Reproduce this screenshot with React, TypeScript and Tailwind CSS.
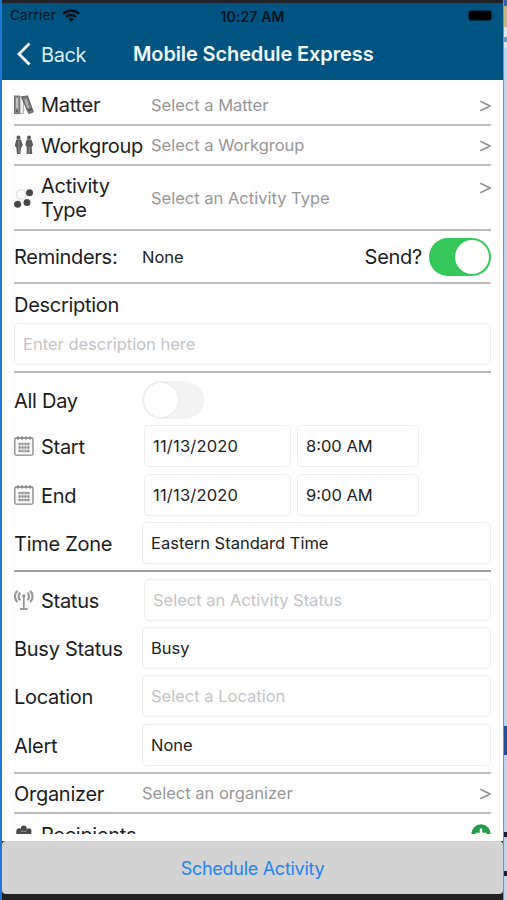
import React from 'react';

const labelText = 'text-[20px] leading-6 tracking-[-0.28px] text-[#1c1c1c]';
const valueText = 'text-[16.5px] leading-5 tracking-[0px]';

function WifiIcon() {
  return (
    <svg className="w-[18px] h-[13px]" viewBox="0 0 18 13">
      <path d="M1 4.8a11.600 11.600 0 0 1 16 0" fill="none" stroke="#05131d" strokeWidth="2.7" />
      <path d="M4 8a7.200 7.200 0 0 1 10 0" fill="none" stroke="#05131d" strokeWidth="2.4" />
      <path d="M6.300 10.200a4 4 0 0 1 5.400 0L9 13z" fill="#05131d" />
    </svg>
  );
}

function BooksIcon() {
  return (
    <svg className="w-5 h-5" viewBox="0 0 20 20">
      <rect x="0.5" y="1" width="5" height="17.5" fill="#8a8a8a" stroke="#666" strokeWidth="0.9" />
      <rect x="2" y="3" width="2" height="10" fill="#c4c4c4" />
      <rect x="6" y="1.5" width="3.500" height="17" fill="#e9e9e9" stroke="#999" strokeWidth="0.7" />
      <path d="M7.500 2l6-1.200L19.300 17l-4.600 1.600z" fill="#7d7d7d" stroke="#555" strokeWidth="0.9" />
      <path d="M10.400 4.500l2-.5 3 8.500-2 .6z" fill="#b4b4b4" />
      <path d="M14 15.500l4-1.400M2 16h2" stroke="#333" strokeWidth="1.1" />
    </svg>
  );
}

function PeopleIcon() {
  return (
    <svg className="w-5 h-5" viewBox="0 0 20 20">
      <g fill="#5a5a5a">
        <circle cx="4.5" cy="2.6" r="2" />
        <path d="M2.300 4.500h4.600l1.900 5.500-1.700 3-.8 6H3l-.6-6L.8 10.500z" />
        <circle cx="15" cy="2.600" r="2" />
        <path d="M12.600 4.500h4.900l1.700 5.500-1.600 2 .7 7h-5.700l.2-7-1.500-2z" />
      </g>
      <path d="M5 6v12M15.200 12v7" stroke="#9a9a9a" strokeWidth="0.9" />
    </svg>
  );
}

function DotsIcon() {
  return (
    <svg className="w-5 h-5" viewBox="0 0 20 20">
      <circle cx="7" cy="6.500" r="4.600" fill="none" stroke="#e2e2e2" strokeWidth="1.200" />
      <circle cx="15.500" cy="4.800" r="3.500" fill="#484848" />
      <circle cx="3.600" cy="16.200" r="3.500" fill="#484848" />
      <circle cx="13" cy="14.400" r="3.500" fill="#484848" />
    </svg>
  );
}

function CalendarIcon() {
  return (
    <svg className="w-5 h-5" viewBox="0 0 20 20" fill="none">
      <rect x="0.8" y="2" width="18.200" height="17.200" rx="1.5" stroke="#858585" strokeWidth="1.300" />
      <path d="M4 .5v3M8 .5v3M12 .5v3M16 .5v3" stroke="#858585" strokeWidth="2" />
      <path d="M4.500 8h11M4.500 11.500h11M4.500 15h11" stroke="#8d8d8d" strokeWidth="2.500" strokeDasharray="2.300 0.600" />
    </svg>
  );
}

function AntennaIcon() {
  return (
    <svg className="w-5 h-5" viewBox="0 0 20 20" fill="none" stroke="#999">
      <path d="M3.500 .8c-3.400 2.800-3.400 8.400 0 11.200M16 .8c3.400 2.800 3.400 8.400 0 11.200" strokeWidth="2.200" />
      <path d="M6.300 2.600c-2.200 2-2.200 5.600 0 7.600M13.300 2.600c2.200 2 2.200 5.600 0 7.600" strokeWidth="2.200" />
      <circle cx="9.800" cy="6" r="1.500" fill="#888" strokeWidth="0.5" />
      <path d="M9.800 6v12.500M6 19h7.600" strokeWidth="1.800" />
    </svg>
  );
}

function GroupIcon() {
  return (
    <svg className="w-5 h-5" viewBox="0 0 20 20" fill="#4a4a4a">
      <circle cx="9.800" cy="4.600" r="3" />
      <circle cx="5" cy="6.800" r="2.600" />
      <circle cx="14.800" cy="6.800" r="2.600" />
      <path d="M2.300 7.500h15v6h-15z" />
    </svg>
  );
}

function Chevron() {
  return (
    <svg className="relative top-px w-3 h-3 ml-auto" viewBox="0 0 12 12">
      <path d="M1.300 1.300L11 6 1.300 10.700" fill="none" stroke="#929292" strokeWidth="1.600" />
    </svg>
  );
}

function Label({ icon, children }: { icon?: React.ReactNode; children: React.ReactNode }) {
  return (
    <div className="w-[128px] shrink-0 flex items-center whitespace-nowrap">
      {icon && <span className="w-[27px] shrink-0">{icon}</span>}
      <span className={`${labelText} pt-px`}>{children}</span>
    </div>
  );
}

function Field({ className = '', placeholder = false, children }: { className?: string; placeholder?: boolean; children: React.ReactNode }) {
  return (
    <div className={`h-[42px] flex items-center rounded-[5px] border border-[#ededed] px-2 ${valueText} ${placeholder ? 'text-[#c4c4c6]' : 'text-[#222]'} ${className}`}>
      {children}
    </div>
  );
}

export default function App() {
  return (
    <div className="w-[507px] h-[900px] flex overflow-hidden bg-[#1d78d6] pl-0.5 font-['Inter','Liberation_Sans',sans-serif]">
      <div className="w-[501px] h-full flex flex-col bg-white">
        <div className="h-[3px] shrink-0 bg-[#252329]" />
        <header className="h-[77px] shrink-0 bg-[#005481]">
          <div className="h-[25px] grid grid-cols-3 items-center text-[#05131d]">
            <div className="flex items-center gap-[6px] pl-2 text-[13.500px] tracking-[0.250px]">
              Carrier
              <WifiIcon />
            </div>
            <div className="pt-px text-center text-[14px] font-semibold tracking-[0.150px]">10:27 AM</div>
            <div className="flex justify-end items-center pr-2">
              <div className="w-6 h-[11px] rounded-[3px] bg-black border border-[#00304b]" />
              <div className="w-0.5 h-1 ml-px rounded-r bg-[#00466c]" />
            </div>
          </div>
          <div className="h-[52px] grid grid-cols-[131px_1fr] items-center text-white">
            <div className="flex items-center pl-[15px] gap-[10px] text-[20px] text-[#dceefa]">
              <svg className="w-[14px] h-6" viewBox="0 0 14 24">
                <path d="M12.500 1.500L2 12l10.500 10.500" fill="none" stroke="#fff" strokeWidth="2.800" />
              </svg>
              <span className="tracking-[-0.4px] pt-px">Back</span>
            </div>
            <h1 className="text-[20px] font-semibold tracking-[-0.120px] whitespace-nowrap text-[#f2faff]">Mobile Schedule Express</h1>
          </div>
        </header>

        <main className="h-[754px] shrink-0 overflow-hidden pl-3 pr-3">
          <div className="h-[46px] flex items-center pt-[5px] border-b-2 border-[#bbbbbd]">
            <Label icon={<BooksIcon />}>Matter</Label>
            <span className={`${valueText} pl-[9px] text-[#969696]`}>Select a Matter</span>
            <Chevron />
          </div>
          <div className="h-10 flex items-center border-b-2 border-[#bbbbbd]">
            <Label icon={<PeopleIcon />}>Workgroup</Label>
            <span className={`${valueText} pl-[9px] text-[#969696]`}>Select a Workgroup</span>
            <Chevron />
          </div>
          <div className="h-[65px] flex items-center border-b-2 border-[#bbbbbd]">
            <Label icon={<DotsIcon />}>Activity<br />Type</Label>
            <span className={`${valueText} pl-[9px] text-[#969696]`}>Select an Activity Type</span>
            <div className="ml-auto self-start pt-[15px]"><Chevron /></div>
          </div>
          <div className="h-[53px] flex items-center border-b-2 border-[#bbbbbd]">
            <Label>Reminders:</Label>
            <span className={`${valueText} text-[#222]`}>None</span>
            <span className={`${labelText} ml-auto mr-[7px] pt-px`}>Send?</span>
            <div className="w-[62px] h-[38px] rounded-full bg-[#34c759] p-0.5 flex justify-end">
              <div className="w-[34px] h-[34px] rounded-full bg-white" />
            </div>
          </div>

          <section className="h-[89px] pt-2 border-b-2 border-[#bbbbbd]">
            <div className={`${labelText} pt-px`}>Description</div>
            <Field className="mt-[6px]" placeholder>Enter description here</Field>
          </section>

          <section className="h-[199px] pt-2 border-b-2 border-[#a0a0a0]">
            <div className="h-[38px] flex items-center">
              <Label>All Day</Label>
              <div className="w-[62px] h-[38px] rounded-full bg-[#f3f3f3] p-0.5">
                <div className="w-[34px] h-[34px] rounded-full bg-white shadow-[0_0_3px_#00000014]" />
              </div>
            </div>
            <div className="mt-[6px] flex items-center">
              <Label icon={<CalendarIcon />}>Start</Label>
              <Field className="ml-0.5 w-[147px]"><span className="tracking-[0.2px]">11/13/2020</span></Field>
              <Field className="ml-[6px] w-[122px]">8:00 AM</Field>
            </div>
            <div className="mt-[7px] flex items-center">
              <Label icon={<CalendarIcon />}>End</Label>
              <Field className="ml-0.5 w-[147px]"><span className="tracking-[0.2px]">11/13/2020</span></Field>
              <Field className="ml-[6px] w-[122px]">9:00 AM</Field>
            </div>
            <div className="mt-[6px] flex items-center">
              <Label>Time Zone</Label>
              <Field className="flex-1">Eastern Standard Time</Field>
            </div>
          </section>

          <section className="h-[202px] pt-[7px] border-b-2 border-[#bbbbbd]">
            <div className="flex items-center">
              <Label icon={<AntennaIcon />}>Status</Label>
              <Field className="ml-0.5 flex-1" placeholder>Select an Activity Status</Field>
            </div>
            <div className="mt-[6px] flex items-center">
              <Label>Busy Status</Label>
              <Field className="flex-1">Busy</Field>
            </div>
            <div className="mt-[6px] flex items-center">
              <Label>Location</Label>
              <Field className="flex-1" placeholder>Select a Location</Field>
            </div>
            <div className="mt-[7px] flex items-center">
              <Label>Alert</Label>
              <Field className="flex-1">None</Field>
            </div>
          </section>

          <div className="h-10 flex items-center border-b-2 border-[#bbbbbd]">
            <Label>Organizer</Label>
            <span className={`${valueText} text-[#969696]`}>Select an organizer</span>
            <Chevron />
          </div>
          <div className="h-10 flex items-center">
            <Label icon={<GroupIcon />}>Recipients</Label>
            <svg className="w-5 h-5 ml-auto" viewBox="0 0 20 20">
              <circle cx="10" cy="10" r="9.700" fill="#219b46" />
              <path d="M10 4.500v11M4.500 10h11" stroke="#fff" strokeWidth="2.500" />
            </svg>
          </div>
        </main>

        <div className="h-[7px] shrink-0" />
        <div className="h-[66px] shrink-0 bg-[#232323]">
          <button className="w-full h-[53px] rounded-[4px] bg-[#d3d3d3] pt-0.5 text-[18px] text-[#2684f0] tracking-[-0.280px]">Schedule Activity</button>
        </div>
      </div>

      {/* sliver of the desktop behind the simulator */}
      <div className="w-1 h-full flex flex-col bg-[#bdd2eb] border-l border-[#5a9bd0]">
        <div className="h-[6px] bg-[#3860b0]" />
        <div className="h-[21px] bg-[#c5b67f]" />
        <div className="h-[10px] bg-[#dce7f5]" />
        <div className="h-[5px] bg-[#6c97ce]" />
        <div className="h-[6px] bg-[#dce7f5]" />
        <div className="mt-[678px] h-[29px] bg-[#244c94]" />
        <div className="mt-[77px] h-[5px] bg-[#1d1b44]" />
        <div className="mt-[34px] h-[5px] bg-[#1d1b44]" />
      </div>
    </div>
  );
}
